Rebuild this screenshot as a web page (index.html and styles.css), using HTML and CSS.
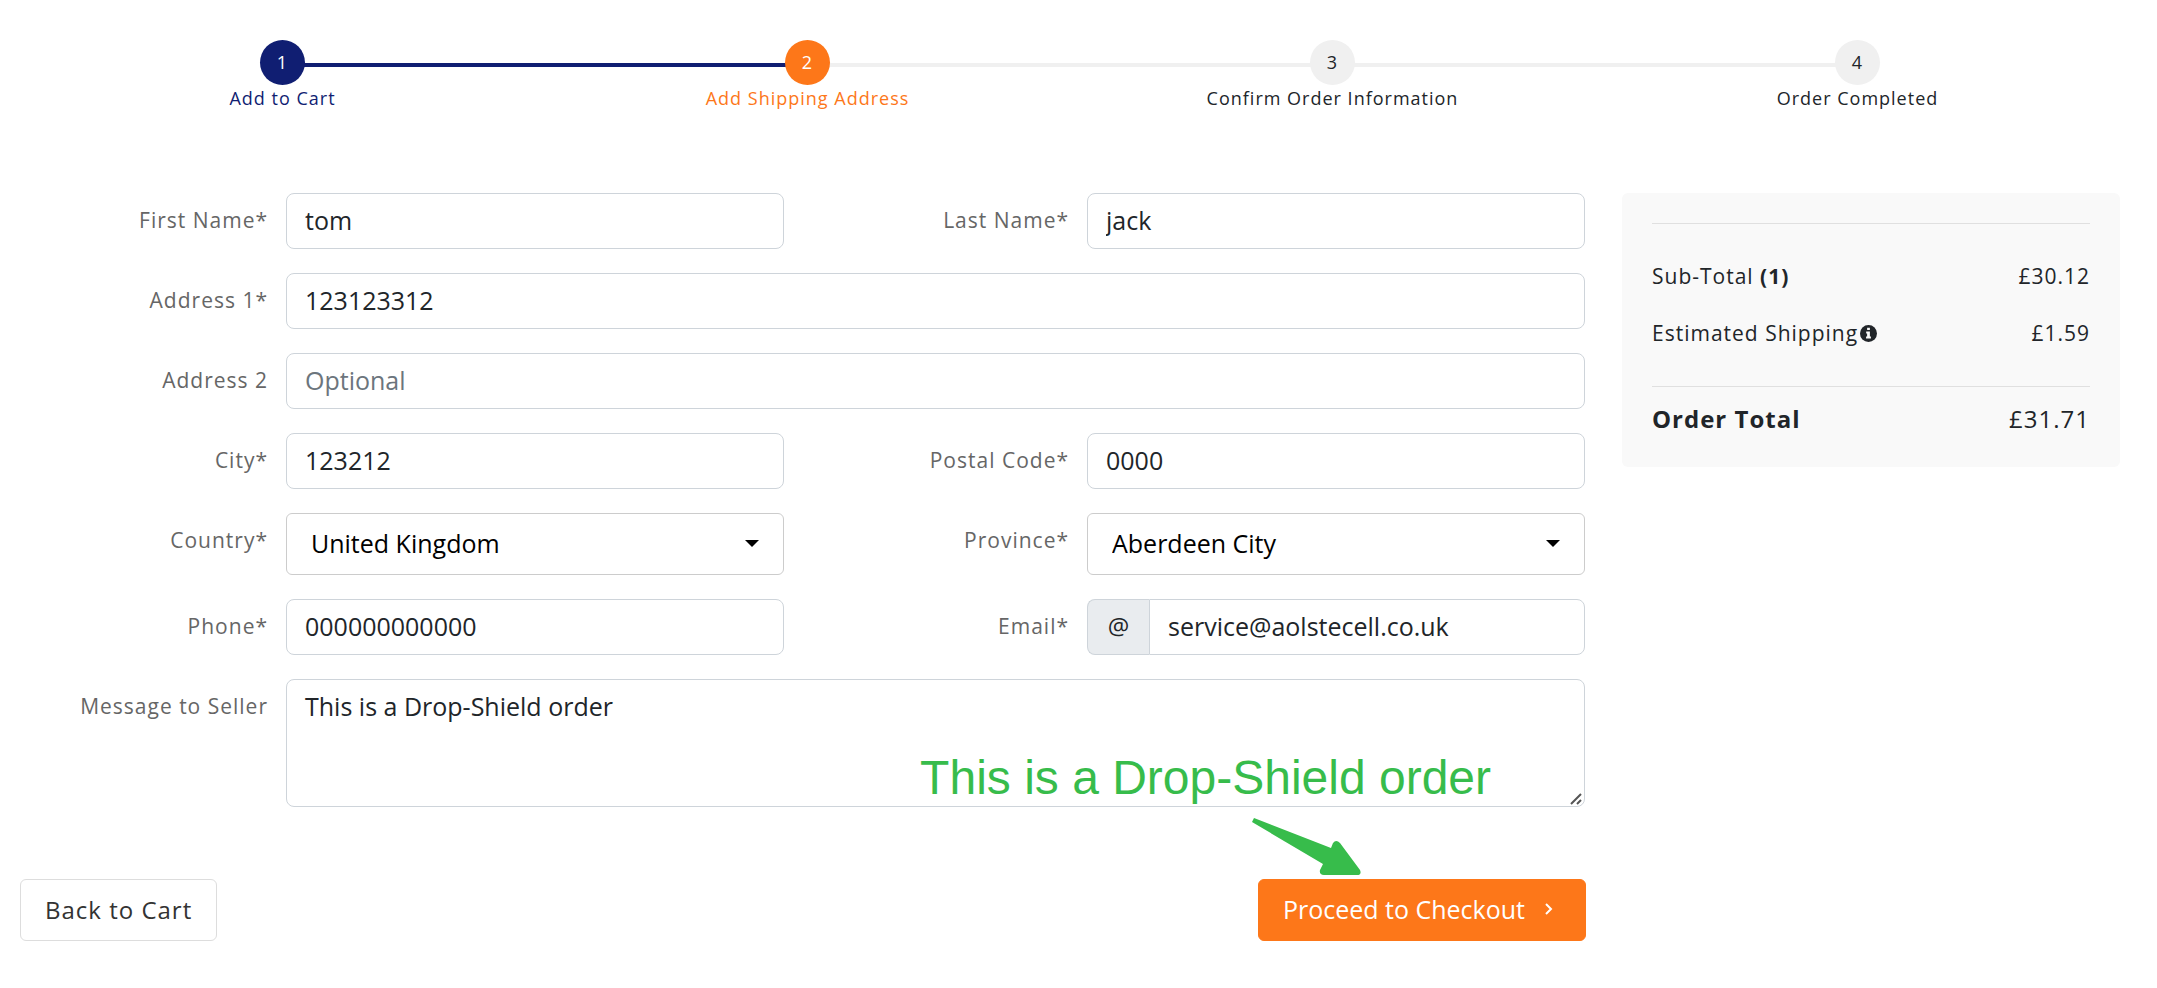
FILE: index.html
```html
<!DOCTYPE html>
<html lang="en">
<head>
<meta charset="utf-8">
<meta name="viewport" content="width=device-width, initial-scale=1">
<title>Shipping Address</title>
<link rel="stylesheet" href="styles.css">
</head>
<body>
<main class="page">
  <ol class="steps">
    <li class="step step-done"><span class="step-dot">1</span><span class="step-name">Add to Cart</span></li>
    <li class="step step-current"><span class="step-dot">2</span><span class="step-name">Add Shipping Address</span></li>
    <li class="step"><span class="step-dot">3</span><span class="step-name">Confirm Order Information</span></li>
    <li class="step"><span class="step-dot">4</span><span class="step-name">Order Completed</span></li>
  </ol>

  <div class="columns">
    <form class="checkout">
      <div class="fields">
        <label class="label" for="first">First Name*</label>
        <input class="control" id="first" type="text" value="tom">
        <label class="label" for="last">Last Name*</label>
        <input class="control" id="last" type="text" value="jack">

        <label class="label" for="addr1">Address 1*</label>
        <input class="control wide" id="addr1" type="text" value="123123312">

        <label class="label" for="addr2">Address 2</label>
        <input class="control wide" id="addr2" type="text" placeholder="Optional">

        <label class="label" for="city">City*</label>
        <input class="control" id="city" type="text" value="123212">
        <label class="label" for="postal">Postal Code*</label>
        <input class="control" id="postal" type="text" value="0000">

        <label class="label" for="country">Country*</label>
        <div class="select-box">
          <select class="select" id="country"><option>United Kingdom</option></select>
          <svg class="caret" viewBox="0 0 14 7" aria-hidden="true"><path d="M0 0h14L7 7z"/></svg>
        </div>
        <label class="label" for="province">Province*</label>
        <div class="select-box">
          <select class="select" id="province"><option>Aberdeen City</option></select>
          <svg class="caret" viewBox="0 0 14 7" aria-hidden="true"><path d="M0 0h14L7 7z"/></svg>
        </div>

        <label class="label" for="phone">Phone*</label>
        <input class="control" id="phone" type="tel" value="000000000000">
        <label class="label" for="email">Email*</label>
        <div class="input-group">
          <span class="addon">@</span>
          <input class="control" id="email" type="email" value="service@aolstecell.co.uk">
        </div>

        <label class="label" for="message">Message to Seller</label>
        <div class="message wide">
          <textarea class="control textarea" id="message">This is a Drop-Shield order</textarea>
          <svg class="grip" viewBox="0 0 12 12" aria-hidden="true"><path d="M1 11L11 1M7 11l4-4"/></svg>
          <div class="note">
            <span class="note-text">This is a Drop-Shield order</span>
            <svg class="note-arrow" viewBox="0 0 109 57" aria-hidden="true"><path d="M2 0L79 30L81 25Q84 21 88 25L108 52Q110 57 105 57H72Q67 57 68 52L71 46L0 4z"/></svg>
          </div>
        </div>
      </div>

      <div class="actions">
        <button class="btn btn-back" type="button">Back to Cart</button>
        <button class="btn btn-next" type="submit">Proceed to Checkout
          <svg class="chevron" viewBox="0 0 8 12" aria-hidden="true"><path d="M1 1l5 5-5 5"/></svg>
        </button>
      </div>
    </form>

    <aside class="summary">
      <dl class="lines">
        <div class="line"><dt>Sub-Total <b>(1)</b></dt><dd>£30.12</dd></div>
        <div class="line">
          <dt>Estimated Shipping<svg class="info" viewBox="0 0 16 16" aria-hidden="true"><circle cx="8" cy="8" r="8"/><path class="info-i" d="M6.700 2.500h2.600v2.300H6.700zM5.800 6.200h3.500v4.700h1V12.700H5.700v-1.800h1V8h-.9z"/></svg></dt>
          <dd>£1.59</dd>
        </div>
      </dl>
      <dl class="total">
        <dt>Order Total</dt><dd>£31.71</dd>
      </dl>
    </aside>
  </div>
</main>
</body>
</html>
```
FILE: styles.css
```css
* {
  box-sizing: border-box;
}

body {
  margin: 0;
  background: #fff;
  color: #212529;
  font-family: "Open Sans", "Noto Sans", sans-serif;
}

.page {
  padding: 40px 37px 46px 20px;
}

/* Progress steps */
.steps {
  display: grid;
  grid-template-columns: repeat(4, 1fr);
  margin: 0 0 82px;
  padding: 0;
  list-style: none;
}

.step {
  position: relative;
  display: flex;
  flex-direction: column;
  align-items: center;
  font-size: 18px;
  line-height: 26px;
  letter-spacing: 1px;
}

.step:not(:last-child)::after {
  content: "";
  position: absolute;
  top: 23px;
  left: 50%;
  width: 100%;
  height: 4px;
  background: #f0f0f0;
}

.step-dot {
  position: relative;
  z-index: 1;
  width: 45px;
  height: 45px;
  border-radius: 50%;
  background: #f0f0f0;
  line-height: 45px;
  text-align: center;
}

.step-done {
  color: #101e72;
}

.step-done .step-dot,
.step-done:not(:last-child)::after {
  background: #101e72;
}

.step-current {
  color: #fd7719;
}

.step-current .step-dot {
  background: #fd7719;
}

.step-done .step-dot,
.step-current .step-dot {
  color: #fff;
}

/* Form and summary */
.columns {
  display: grid;
  grid-template-columns: 1566fr 498fr;
  gap: 36px;
  align-items: start;
}

.fields {
  display: grid;
  grid-template-columns: 248fr 498fr 267fr 498fr;
  gap: 24px 18px;
  align-items: start;
  padding-right: 1px;
}

.wide {
  grid-column: span 3;
}

.label {
  color: #666;
  font-size: 21px;
  line-height: 54px;
  letter-spacing: 1px;
  text-align: right;
  white-space: nowrap;
}

.control {
  display: block;
  width: 100%;
  min-width: 0;
  height: 56px;
  padding: 8px 18px 10px;
  border: 1px solid #ced4da;
  border-radius: 8px;
  background: #fff;
  color: #212529;
  font: inherit;
  font-size: 25px;
  line-height: 36px;
}

.control::placeholder {
  color: #6c757d;
  opacity: 1;
}

.select-box {
  position: relative;
}

.select {
  display: block;
  width: 100%;
  height: 62px;
  padding: 0 48px 2px 24px;
  border: 1px solid #ccc;
  border-radius: 6px;
  background: #fff;
  color: #000;
  font: inherit;
  font-size: 25px;
  appearance: none;
}

.caret {
  position: absolute;
  top: 27px;
  right: 25px;
  width: 14px;
  height: 7px;
  pointer-events: none;
}

.input-group {
  display: flex;
}

.addon {
  flex: none;
  width: 62px;
  border: 1px solid #ced4da;
  border-right: 0;
  border-radius: 8px 0 0 8px;
  background: #e9ecef;
  font-size: 24px;
  line-height: 52px;
  text-align: center;
}

.input-group .control {
  flex: 1;
  border-radius: 0 8px 8px 0;
}

.message {
  position: relative;
}

.textarea {
  height: 128px;
  resize: vertical;
}

.textarea::-webkit-resizer {
  background: transparent;
}

.grip {
  position: absolute;
  right: 3px;
  bottom: 2px;
  width: 12px;
  height: 12px;
  fill: none;
  stroke: #555;
  stroke-width: 2;
  pointer-events: none;
}

/* Callout that lies over the message box */
.note {
  position: absolute;
  top: 75px;
  right: 94px;
  display: flex;
  flex-direction: column;
  align-items: center;
  gap: 16px;
  pointer-events: none;
}

.note-text {
  color: #37bc4b;
  font-family: "Liberation Sans", Arial, sans-serif;
  font-size: 48px;
  line-height: 48px;
  white-space: nowrap;
}

.note-arrow {
  align-self: flex-end;
  width: 109px;
  height: 57px;
  margin-right: 130px;
  fill: #37bc4b;
}

.actions {
  display: flex;
  justify-content: space-between;
  margin-top: 72px;
}

.btn {
  display: flex;
  align-items: center;
  height: 62px;
  padding: 0 24px 2px;
  border: 1px solid #ddd;
  border-radius: 6px;
  background: #fff;
  color: #333;
  font: inherit;
  font-size: 24px;
  letter-spacing: 1px;
}

.btn-next {
  gap: 20px;
  padding-right: 32px;
  border-color: #fd7719;
  background: #fd7719;
  color: #fff;
  font-size: 25px;
  letter-spacing: normal;
}

.chevron {
  width: 8px;
  height: 12px;
  fill: none;
  stroke: #fff;
  stroke-width: 2;
}

.summary {
  padding: 30px;
  border-radius: 6px;
  background: #f9f9f9;
  font-size: 21px;
  letter-spacing: 1px;
}

.lines {
  margin: 0;
  padding: 24px 0;
  border-top: 1px solid #e0e0e0;
}

.line,
.total {
  display: flex;
  align-items: center;
  justify-content: space-between;
}

.line {
  line-height: 57px;
}

.info {
  width: 17px;
  height: 17px;
  margin-left: 2px;
  vertical-align: -1px;
  fill: #212529;
}

.info-i {
  fill: #f9f9f9;
}

.total {
  margin: 0;
  padding-top: 14px;
  border-top: 1px solid #e0e0e0;
  font-size: 24px;
  line-height: 36px;
}

.total dt {
  font-weight: 700;
}

dd {
  margin: 0;
}
```
